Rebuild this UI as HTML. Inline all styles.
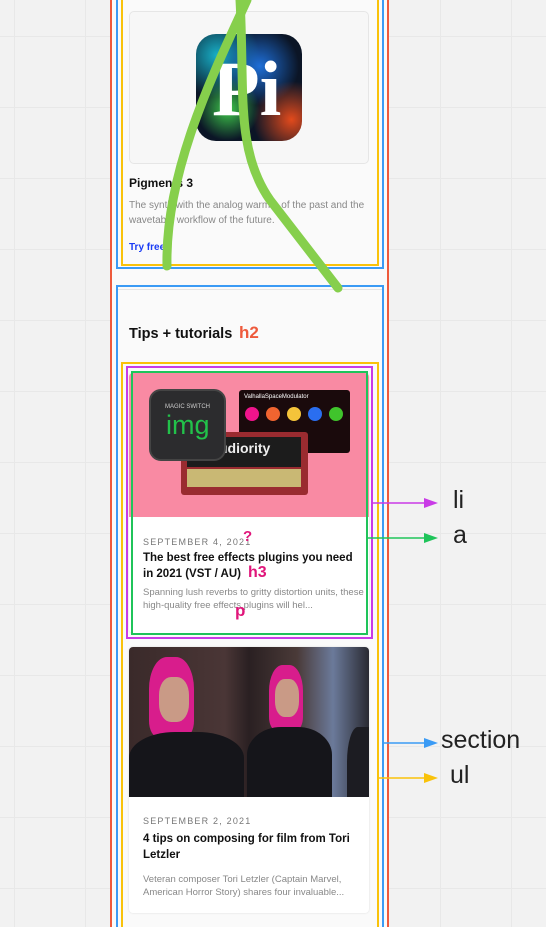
<!DOCTYPE html>
<html style="height:927px;overflow:hidden"><head><meta charset="utf-8"><style>
*{margin:0;padding:0;box-sizing:border-box}
body{width:546px;height:927px;overflow:hidden;position:relative;font-family:"Liberation Sans",sans-serif;
background-color:#f2f2f2;
background-image:linear-gradient(#e8e8e8 1px,transparent 1px),linear-gradient(90deg,#e8e8e8 1px,transparent 1px);
background-size:71px 71px;background-position:14px 36px}
.abs{position:absolute}
.page{left:110px;top:0;width:279px;height:927px;background:#fafafa;border-left:2px solid #ee5a3c;border-right:2px solid #ee5a3c}
.box{position:absolute;border:2px solid}
.t{position:absolute;white-space:nowrap}
.card{background:#fff;border-radius:4px;box-shadow:0 0 2px rgba(0,0,0,.12);overflow:hidden}
.date{font-size:9px;letter-spacing:1.2px;color:#777}
.h3{font-size:11.5px;font-weight:bold;color:#111;line-height:16px;white-space:normal;width:220px}
.p{font-size:9.5px;color:#888;line-height:13px;white-space:normal;width:225px}
</style></head><body>
<div class="abs page"></div>
<div class="box" style="left:116px;top:-4px;width:268px;height:273px;border-color:#3b9bf5"></div>
<div class="box" style="left:121px;top:-4px;width:258px;height:270px;border-color:#f9c20a"></div>
<div class="abs" style="left:129px;top:11px;width:240px;height:153px;background:#f7f7f7;border:1px solid #e6e6e6;border-radius:5px"></div>
<div class="abs" style="left:196px;top:34px;width:106px;height:107px;border-radius:20px;overflow:hidden;background:radial-gradient(circle at 30% 70%,#3ec94a 0,transparent 30%),radial-gradient(circle at 90% 80%,#e24a1c 0,transparent 30%),radial-gradient(circle at 60% 30%,#1e6fd8 0,transparent 40%),radial-gradient(circle at 20% 20%,#18b0c8 0,transparent 35%),#0b1526">
<div class="t" style="left:16px;top:10px;font-family:'Liberation Serif',serif;font-weight:bold;font-size:78px;color:#fff;line-height:90px">Pi</div></div>
<div class="t" style="left:129px;top:176px;font-size:12px;font-weight:bold;color:#111">Pigments 3</div>
<div class="t p" style="left:129px;top:198px;width:240px;font-size:10px;line-height:15px">The synth with the analog warmth of the past and the wavetable workflow of the future.</div>
<div class="t" style="left:129px;top:242px;font-size:10px;font-weight:bold;color:#1a3cf5">Try free</div>
<div class="box" style="left:116px;top:285px;width:268px;height:652px;border-color:#3b9bf5"></div>
<div class="abs" style="left:118px;top:289px;width:264px;height:1px;background:#e4e4e4"></div>
<div class="t" style="left:129px;top:326px;font-size:14.5px;font-weight:bold;color:#111">Tips + tutorials</div>
<div class="t" style="left:239px;top:323px;font-size:17px;font-weight:bold;color:#ee5a3c">h2</div>
<div class="box" style="left:121px;top:362px;width:258px;height:572px;border-color:#f9c20a"></div>
<div class="box" style="left:126px;top:366px;width:247px;height:273px;border-color:#c93be6"></div>
<div class="abs card" style="left:129px;top:373px;width:240px;height:260px">
<div style="height:144px;background:#f98aa3;position:relative">
<div class="abs" style="left:110px;top:17px;width:111px;height:63px;background:#1a0a0c;border-radius:3px"></div>
<div class="t" style="left:115px;top:21px;font-size:6px;color:#fff">ValhallaSpaceModulator</div>
<div class="abs" style="left:116px;top:34px;width:14px;height:14px;border-radius:50%;background:#f0148c"></div>
<div class="abs" style="left:137px;top:34px;width:14px;height:14px;border-radius:50%;background:#f06430"></div>
<div class="abs" style="left:158px;top:34px;width:14px;height:14px;border-radius:50%;background:#f4c43a"></div>
<div class="abs" style="left:179px;top:34px;width:14px;height:14px;border-radius:50%;background:#2a6ef0"></div>
<div class="abs" style="left:200px;top:34px;width:14px;height:14px;border-radius:50%;background:#40c42c"></div>
<div class="abs" style="left:52px;top:59px;width:127px;height:63px;background:#9a2b30;border-radius:3px"></div>
<div class="abs" style="left:58px;top:64px;width:114px;height:30px;background:#1c1c1c"></div>
<div class="t" style="left:90px;top:67px;font-size:14px;font-weight:bold;color:#eee">udiority</div>
<div class="abs" style="left:58px;top:96px;width:114px;height:18px;background:#c9b874"></div>
<div class="abs" style="left:20px;top:16px;width:77px;height:72px;background:#2c2c2e;border-radius:12px;border:2px solid #444"></div>
<div class="t" style="left:36px;top:31px;font-size:6px;color:#ccc">MAGIC SWITCH</div>
<div class="t" style="left:37px;top:37px;font-size:27px;color:#22c24a">img</div>
</div>
<div class="t date" style="left:14px;top:164px">SEPTEMBER 4, 2021</div>
<div class="t h3" style="left:14px;top:177px">The best free effects plugins you need in 2021 (VST / AU)</div>
<div class="t p" style="left:14px;top:213px">Spanning lush reverbs to gritty distortion units, these high-quality free effects plugins will hel...</div>
</div>
<div class="box" style="left:131px;top:371px;width:237px;height:264px;border-color:#1fc45a"></div>
<div class="t" style="left:243px;top:528px;font-size:15px;font-weight:bold;color:#e0157a">?</div>
<div class="t" style="left:248px;top:564px;font-size:16px;font-weight:bold;color:#e0157a">h3</div>
<div class="t" style="left:235px;top:601px;font-size:17px;font-weight:bold;color:#e0157a">p</div>
<div class="abs card" style="left:129px;top:647px;width:240px;height:266px">
<div style="height:150px;background:linear-gradient(90deg,#3a2a2a 0,#4a3636 40%,#2a2022 50%,#4a3a38 70%,#6b7a9a 85%,#2a2a32 100%);position:relative">
<div class="abs" style="left:20px;top:10px;width:45px;height:80px;border-radius:40% 40% 20% 20%;background:#d81d8c"></div>
<div class="abs" style="left:30px;top:30px;width:30px;height:45px;border-radius:40%;background:#c99a86"></div>
<div class="abs" style="left:0;top:85px;width:115px;height:65px;border-radius:40% 40% 0 0;background:#15151a"></div>
<div class="abs" style="left:140px;top:18px;width:34px;height:65px;border-radius:40% 40% 20% 20%;background:#d81d8c"></div>
<div class="abs" style="left:146px;top:32px;width:24px;height:38px;border-radius:40%;background:#c99a86"></div>
<div class="abs" style="left:118px;top:80px;width:85px;height:70px;border-radius:40% 40% 0 0;background:#15151a"></div>
<div class="abs" style="left:218px;top:80px;width:22px;height:70px;border-radius:50% 0 0 0;background:#1c1c22"></div>
</div>
<div class="t date" style="left:14px;top:169px">SEPTEMBER 2, 2021</div>
<div class="t h3" style="left:14px;top:184px">4 tips on composing for film from Tori Letzler</div>
<div class="t p" style="left:14px;top:226px">Veteran composer Tori Letzler (Captain Marvel, American Horror Story) shares four invaluable...</div>
</div>
<svg class="abs" style="left:0;top:0" width="546" height="927">
<path d="M247,0 C215,70 165,170 167,266" stroke="#86cf4c" stroke-width="9" fill="none" stroke-linecap="round"/>
<path d="M240,0 C245,90 235,150 270,200 L338,288" stroke="#86cf4c" stroke-width="9" fill="none" stroke-linecap="round"/>
<g stroke-width="1.5">
<line x1="372" y1="503" x2="428" y2="503" stroke="#c93be6"/><path d="M424,498 L438,503 L424,508Z" fill="#c93be6"/>
<line x1="367" y1="538" x2="428" y2="538" stroke="#1fc45a"/><path d="M424,533 L438,538 L424,543Z" fill="#1fc45a"/>
<line x1="384" y1="743" x2="428" y2="743" stroke="#3b9bf5"/><path d="M424,738 L438,743 L424,748Z" fill="#3b9bf5"/>
<line x1="378" y1="778" x2="428" y2="778" stroke="#f9c20a"/><path d="M424,773 L438,778 L424,783Z" fill="#f9c20a"/>
</g></svg>
<div class="t" style="left:453px;top:486px;font-size:25px;color:#222">li</div>
<div class="t" style="left:453px;top:521px;font-size:25px;color:#222">a</div>
<div class="t" style="left:441px;top:726px;font-size:25px;color:#222">section</div>
<div class="t" style="left:450px;top:761px;font-size:25px;color:#222">ul</div>
</body></html>
